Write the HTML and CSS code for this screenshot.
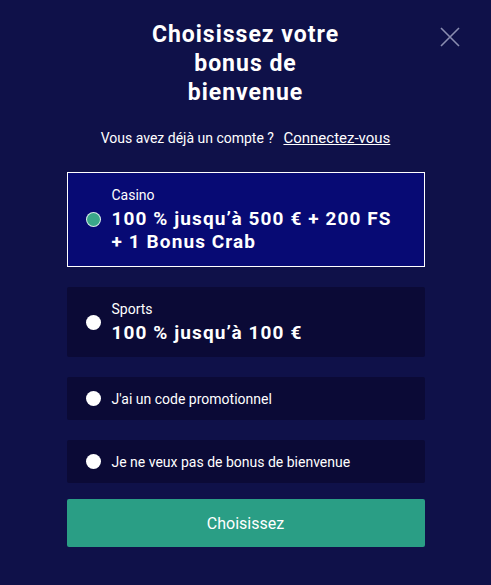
FILE: index.html
```html
<!DOCTYPE html>
<html lang="fr">
<head>
  <meta charset="UTF-8" />
  <title>Choisissez votre bonus de bienvenue</title>
  <link rel="stylesheet" href="styles.css">
</head>
<body>
  <div class="modal">
    <button class="close" aria-label="Fermer">
      <svg width="20" height="20" viewBox="0 0 20 20">
        <path d="M1 1 L19 19 M19 1 L1 19" stroke="#8a8db0" stroke-width="1.6" fill="none" />
      </svg>
    </button>

    <h1>Choisissez votre<br>bonus de<br>bienvenue</h1>

    <p class="login">Vous avez déjà un compte ? <a href="#">Connectez-vous</a></p>

    <div class="options">
      <label class="option selected">
        <span class="radio"></span>
        <span class="text">
          <span class="kind">Casino</span>
          <span class="offer">100 % jusqu’à 500 € + 200 FS + 1 Bonus Crab</span>
        </span>
      </label>

      <label class="option">
        <span class="radio"></span>
        <span class="text">
          <span class="kind">Sports</span>
          <span class="offer">100 % jusqu’à 100 €</span>
        </span>
      </label>

      <label class="option small">
        <span class="radio"></span>
        <span class="text">J'ai un code promotionnel</span>
      </label>

      <label class="option small">
        <span class="radio"></span>
        <span class="text">Je ne veux pas de bonus de bienvenue</span>
      </label>
    </div>

    <button class="submit">Choisissez</button>
  </div>
</body>
</html>
```

FILE: styles.css
```css
body {
  margin: 0;
  background: #0f1149;
  font-family: Roboto, "Liberation Sans", sans-serif;
  color: #fff;
}

.modal {
  position: relative;
  width: 358px;
  margin: 0 auto;
  padding-top: 20px;
}

.close {
  position: absolute;
  top: 27px;
  right: -35px;
  padding: 0;
  border: 0;
  background: none;
  cursor: pointer;
}

.close svg {
  display: block;
}

h1 {
  margin: 0;
  text-align: center;
  font-size: 23px;
  line-height: 29px;
  font-weight: 700;
  letter-spacing: 1px;
}

.login {
  margin: 21px 0 0;
  text-align: center;
  font-size: 14px;
  line-height: 20px;
}

.login a {
  margin-left: 6px;
  color: #fff;
  font-size: 15px;
}

.options {
  display: flex;
  flex-direction: column;
  gap: 20px;
  margin-top: 24px;
}

.option {
  display: flex;
  align-items: center;
  gap: 11px;
  padding: 13px 19px;
  background: #0b0a36;
  border-radius: 2px;
  cursor: pointer;
}

.option.selected {
  background: #070a74;
  border: 1px solid #fff;
  padding: 13px 18px;
  border-radius: 0;
}

.option.small {
  padding: 0 19px;
  height: 43px;
  font-size: 14px;
}

.radio {
  flex-shrink: 0;
  width: 15px;
  height: 15px;
  border-radius: 50%;
  background: #fff;
}

.selected .radio {
  background: #3aa88a;
  box-shadow: 0 0 0 1px #d8efe8;
  width: 13px;
  height: 13px;
  margin: 0 1px;
}

.text {
  display: flex;
  flex-direction: column;
}

.kind {
  font-size: 14px;
  line-height: 18px;
}

.offer {
  margin-top: 3px;
  font-size: 19px;
  line-height: 23px;
  font-weight: 700;
  letter-spacing: 1.1px;
}

.submit {
  display: block;
  width: 100%;
  height: 48px;
  margin-top: 16px;
  border: 0;
  border-radius: 2px;
  background: #2a9e85;
  color: #fff;
  font-family: Roboto, "Liberation Sans", sans-serif;
  font-size: 16px;
  cursor: pointer;
}
```
